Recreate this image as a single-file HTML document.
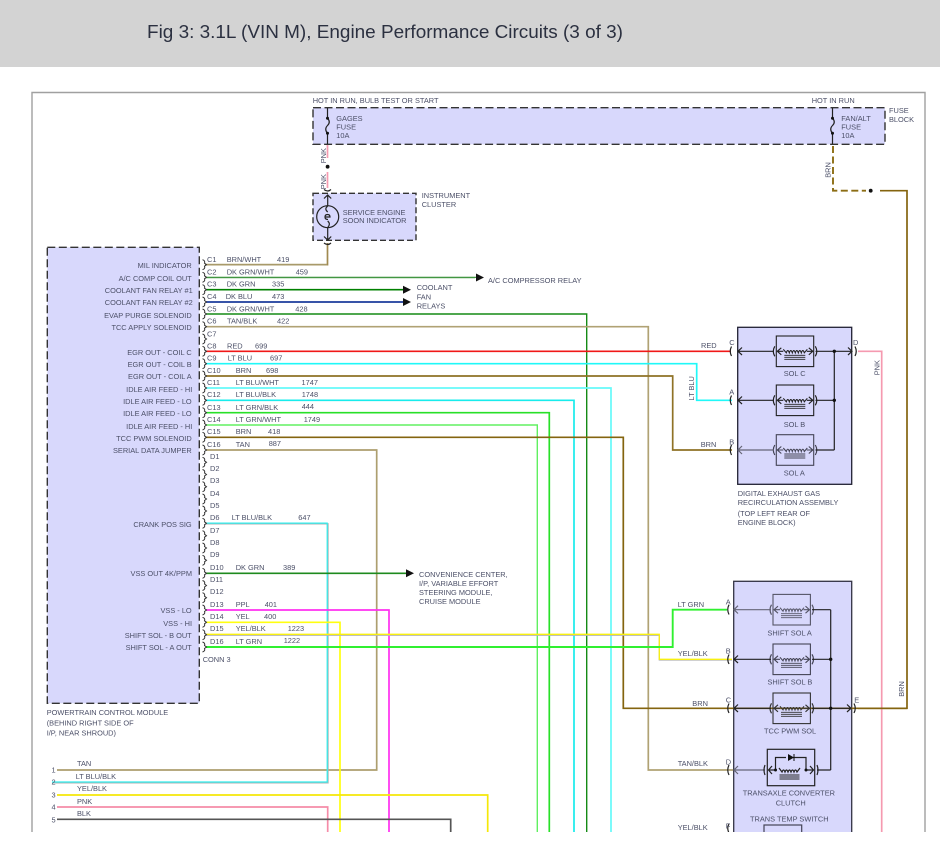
<!DOCTYPE html>
<html><head><meta charset="utf-8"><title>Fig 3</title>
<style>
html,body{margin:0;padding:0;background:#fff;width:940px;height:844px;overflow:hidden}
svg{display:block;position:absolute;left:0;top:0}
.t{filter:blur(.25px)}
.t text{font-family:"Liberation Sans",sans-serif;font-size:7.4px;fill:#4c5068}
.r text{text-anchor:end}
.w{fill:none;stroke-width:1.7}
.k{fill:none;stroke:#222;stroke-width:1.2}
</style></head><body>
<svg width="940" height="844" viewBox="0 0 940 844" xmlns="http://www.w3.org/2000/svg">
<defs>
<g id="pin"><path d="M202.5 -5Q205.500 -4 204.500 -1.500L206.500 0L204.500 1.500Q205.500 4 202.500 5" fill="none" stroke="#333" stroke-width="1"/></g>
<g id="coil" fill="none">
<path d="M7 -2L10 1.500Q11.500 -3 13 1.500Q14.500 -3 16 1.500Q17.500 -3 19 1.500Q20.500 -3 22 1.500Q23.500 -3 25 1.500Q26.500 -3 28 1.500L31 -2"/>
</g>
<g id="sol" fill="none">
<rect x="0" y="-15.300" width="37.400" height="30.600"/>
<path d="M-1.500 -5Q-4.500 0 -1.500 5M39 -5Q42 0 39 5" stroke-width="1.200"/>
<path d="M5 -3.500L1 0L5 3.500M32.500 -3.500L36.500 0L32.500 3.500M1 0H7M30.500 0H36.500"/>
<use href="#coil"/>
<path d="M8 4H29M8 6H29M8 8H29" stroke-width=".9"/>
</g>
<clipPath id="c"><rect x="0" y="0" width="940" height="832"/></clipPath>
</defs>
<rect width="940" height="67" fill="#d3d3d3"/>
<text x="147" y="38" font-family="'Liberation Sans',sans-serif" font-size="18.500" fill="#2b3040" textLength="476" lengthAdjust="spacingAndGlyphs">Fig 3: 3.1L (VIN M), Engine Performance Circuits (3 of 3)</text>

<g clip-path="url(#c)">
<path d="M32 840V92.500H925V840" fill="none" stroke="#a0a0a0" stroke-width="1.400"/>

<!-- boxes -->
<rect x="313" y="107.700" width="572" height="36.600" fill="#d8d8fc" stroke="#333" stroke-width="1.400" stroke-dasharray="8 3.500"/>
<rect x="313" y="193.300" width="103" height="47" fill="#d8d8fc" stroke="#333" stroke-width="1.400" stroke-dasharray="6 3"/>
<rect x="47.300" y="247.300" width="152" height="456" fill="#d8d8fc" stroke="#333" stroke-width="1.400" stroke-dasharray="8 3.500"/>
<rect x="737.700" y="327.300" width="114" height="157" fill="#d8d8fc" stroke="#223" stroke-width="1.300"/>
<rect x="733.700" y="581.300" width="118" height="270" fill="#d8d8fc" stroke="#334" stroke-width="1.300"/>

<!-- wires -->
<g class="w">
<path d="M327.500 145V158M327.500 172V188" stroke="#f59ab0" stroke-width="1.700"/>
<path d="M327.500 243V264.700H205" stroke="#a08a50"/>
<path d="M205 264.700H327" stroke="#a89a6a"/>
<path d="M206 278H475" stroke="#cfe5cf"/><path d="M206 277.300H476" stroke="#2e8b2e" stroke-width="1.200"/>
<path d="M206 289.700H404" stroke="#008000"/>
<path d="M206 302H404" stroke="#1c3c9c"/>
<path d="M206 314H586.700V832" stroke="#158a15" stroke-width="1.400"/>
<path d="M206 326.700H648.300V770H733" stroke="#b0a274"/>
<path d="M206 351.300H731" stroke="#f01818"/>
<path d="M206 363.700H696.700V400.300H732" stroke="#20f8f8"/>
<path d="M206 376H672.700V450H732" stroke="#8f7226"/>
<path d="M206 388H611V832" stroke="#66fafa"/>
<path d="M206 400.300H574V832" stroke="#18ecec"/>
<path d="M206 412.700H549.300V832" stroke="#28e028"/>
<path d="M206 425H537.300V832" stroke="#60f060" stroke-width="1.400"/>
<path d="M206 437.300H623.300V708.300H907V190.700H880" stroke="#84640f"/>
<path d="M206 450H376.700V770H57" stroke="#ad9f6f"/>
<path d="M206 523.800H328V782.800H52" stroke="#b0b0b0" stroke-width="1.300"/>
<path d="M206 523.100H327.200V782H52" stroke="#30eeee" stroke-width="1.200"/>
<path d="M206 573.300H406" stroke="#1e8a1e"/>
<path d="M206 610H389V832" stroke="#ff30f0"/>
<path d="M206 622.300H340V832" stroke="#ffff10"/>
<path d="M57 795H487.700V832" stroke="#f5e808"/>
<path d="M57 807H327.700V832" stroke="#f58ca8"/>
<path d="M57 819.300H450.700V832" stroke="#555"/>
<path d="M206 635.300H659.300V660H732" stroke="#b5b5b5" stroke-width="1.200"/>
<path d="M206 634.300H659.300V659.300H732" stroke="#f8f010" stroke-width="1.300"/>
<path d="M206 647H672.700V609.700H727" stroke="#30f030" stroke-width="1.900"/>
<path d="M858 351.300H881.700V832" stroke="#f59ab0"/>
<path d="M858 708.300H907" stroke="#84640f"/>
<path d="M833 146V190.700H866" stroke="#8c6d14" stroke-dasharray="7 3.500" stroke-width="1.900"/>
</g>

<!-- arrows -->
<path d="M476 273.500L484 277.500L476 281.500Z M403 285.700L411 289.700L403 293.700Z M403 298L411 302L403 306Z M406 569.300L414 573.300L406 577.300Z" fill="#111"/>
<circle cx="327.600" cy="166.700" r="1.900" fill="#111"/>
<circle cx="870.700" cy="190.700" r="1.900" fill="#111"/>

<!-- fuses -->
<g class="k">
<path d="M327.500 108V118.300Q331 122 327.500 125.500Q324 129 327.500 133.300V144"/>
<path d="M832.500 108V118.300Q836 122 832.500 125.500Q829 129 832.500 133.300V144"/>
</g>
<circle cx="327.500" cy="118.300" r="1.500" fill="#111"/><circle cx="327.500" cy="133.300" r="1.500" fill="#111"/>
<circle cx="832.500" cy="118.300" r="1.500" fill="#111"/><circle cx="832.500" cy="133.300" r="1.500" fill="#111"/>

<!-- lamp -->
<g class="k">
<path d="M324 189.500Q327.700 192.500 331 189.500M324 243Q327.700 246 331 243"/>
<path d="M327.700 195V240M324 198.500L327.700 195L331.200 198.500M324 236.500L327.700 240L331.200 236.500"/>
<circle cx="327.700" cy="216.700" r="11" fill="#d8d8fc" stroke-width="1.200"/>
<path d="M327.700 206Q324 209 327.700 212M327.700 221Q331 224 327.700 227.500M325 217H330Q330 214.500 327.500 214.500Q325 214.500 325 217Q325 219.500 328 219.500"/>
</g>

<!-- pins -->
<use href="#pin" y="264.700"/><use href="#pin" y="277.300"/><use href="#pin" y="289.700"/><use href="#pin" y="302"/><use href="#pin" y="314"/><use href="#pin" y="326.700"/><use href="#pin" y="339"/><use href="#pin" y="351.300"/><use href="#pin" y="363.700"/><use href="#pin" y="376"/><use href="#pin" y="388"/><use href="#pin" y="400.300"/><use href="#pin" y="412.700"/><use href="#pin" y="425"/><use href="#pin" y="437.300"/><use href="#pin" y="450"/><use href="#pin" y="462.300"/><use href="#pin" y="474.500"/><use href="#pin" y="486.700"/><use href="#pin" y="499"/><use href="#pin" y="511"/><use href="#pin" y="523.300"/><use href="#pin" y="535.700"/><use href="#pin" y="548"/><use href="#pin" y="560.300"/><use href="#pin" y="573.300"/><use href="#pin" y="585.500"/><use href="#pin" y="597.700"/><use href="#pin" y="610"/><use href="#pin" y="622.300"/><use href="#pin" y="634.700"/><use href="#pin" y="647"/>

<!-- EGR solenoids -->
<g stroke="#222" stroke-width="1.100">
<use href="#sol" x="776.300" y="351.300"/>
<use href="#sol" x="776.300" y="400.300"/>
<use href="#sol" x="776.300" y="450" stroke="#445"/>
</g>
<g class="k">
<path d="M731.500 346.500Q729 351.300 731.500 356M731.500 395.500Q729 400.300 731.500 405M731.500 445Q729 450 731.500 455"/>
<path d="M742 347.500L738 351.300L742 355M738 351.300H774M742 396.500L738 400.300L742 404M738 400.300H774"/>
<path d="M742 446L738 450L742 454M738 450H774" stroke="#667"/>
<path d="M815.500 351.300H852M848 347.500L852 351.300L848 355M855 346.500Q857.500 351.300 855 356"/>
<path d="M815.500 400.300H834.300M815.500 450H834.300M834.300 351.300V450"/>
</g>
<circle cx="834.300" cy="351.300" r="1.700" fill="#111"/><circle cx="834.300" cy="400.300" r="1.700" fill="#111"/>

<!-- Trans solenoids -->
<g stroke="#333" stroke-width="1.100">
<use href="#sol" x="773" y="609.700" stroke="#556"/>
<use href="#sol" x="773" y="659.300" stroke="#445"/>
<use href="#sol" x="773" y="708.300"/>
</g>
<g class="k">
<path d="M729 604.700Q726.500 609.700 729 614.500M729 654.500Q726.500 659.300 729 664M729 703.500Q726.500 708.300 729 713M729 765Q726.500 770 729 775M729 824Q726.500 828 729 833"/>
<path d="M738 605.700L734 609.700L738 613.500M734 609.700H771" stroke="#667"/>
<path d="M738 655.500L734 659.300L738 663M734 659.300H771M738 704.500L734 708.300L738 712M734 708.300H771"/>
<path d="M738 766L734 770L738 774M734 770H765" stroke="#667"/>
<path d="M812 609.700H830.700M812 659.300H830.700M812 708.300H851M847 704.500L851 708.300L847 712M854 703.500Q856.500 708.300 854 713M817 770H830.700M830.700 609.700V770"/>
<rect x="767.300" y="749.300" width="47.400" height="36.400"/>
<path d="M765 765Q763 770 765 775M817 765Q819 770 817 775M772 766L768.500 770L772 774M810 766L813.500 770L810 774M768.500 770H775.500M806 770H813.500"/>
<path d="M775.500 770V757.500H786M793 757.500H806V770"/>
<path d="M779 768L782 772Q783.500 768 785 772Q786.500 768 788 772Q789.500 768 791 772Q792.500 768 794 772Q795.500 768 797 772L800 768"/>
<path d="M779.500 775H799.500M779.500 777H799.500M779.500 779H799.500" stroke-width=".9"/>
<rect x="764" y="825" width="37.700" height="20" stroke="#445"/>
</g>
<path d="M788 754V761L794 757.500Z" fill="#111"/><path d="M794 754V761" stroke="#111"/>
<circle cx="775.500" cy="770" r="1.500" fill="#111"/><circle cx="806" cy="770" r="1.500" fill="#111"/>
<circle cx="830.700" cy="659.300" r="1.700" fill="#111"/><circle cx="830.700" cy="708.300" r="1.700" fill="#111"/>

<!-- text -->
<g class="t">
<text x="312.700" y="103">HOT IN RUN, BULB TEST OR START</text>
<text x="811.700" y="103">HOT IN RUN</text>
<text x="889" y="113">FUSE</text><text x="889" y="122">BLOCK</text>
<text x="336.300" y="121">GAGES</text><text x="336.300" y="129.300">FUSE</text><text x="336.300" y="138">10A</text>
<text x="841.300" y="121">FAN/ALT</text><text x="841.300" y="129.300">FUSE</text><text x="841.300" y="138">10A</text>
<text x="421.700" y="198">INSTRUMENT</text><text x="421.700" y="207">CLUSTER</text>
<text x="342.700" y="215">SERVICE ENGINE</text><text x="342.700" y="223">SOON INDICATOR</text>
<text x="488" y="283">A/C COMPRESSOR RELAY</text>
<text x="416.700" y="290">COOLANT</text><text x="416.700" y="299.300">FAN</text><text x="416.700" y="308.300">RELAYS</text>
<text x="419" y="577">CONVENIENCE CENTER,</text><text x="419" y="586">I/P, VARIABLE EFFORT</text><text x="419" y="595">STEERING MODULE,</text><text x="419" y="604">CRUISE MODULE</text>
<text transform="translate(326,155.700) rotate(-90)" text-anchor="middle">PNK</text>
<text transform="translate(326,181.700) rotate(-90)" text-anchor="middle">PNK</text>
<text transform="translate(830.500,170) rotate(-90)" text-anchor="middle">BRN</text>
<text transform="translate(694,388.300) rotate(-90)" text-anchor="middle">LT BLU</text>
<text transform="translate(879.500,367.700) rotate(-90)" text-anchor="middle">PNK</text>
<text transform="translate(904,689) rotate(-90)" text-anchor="middle">BRN</text>

<g class="r">
<text x="191.700" y="268">MIL INDICATOR</text>
<text x="191.700" y="281">A/C COMP COIL OUT</text>
<text x="192.700" y="293">COOLANT FAN RELAY #1</text>
<text x="192.700" y="305">COOLANT FAN RELAY #2</text>
<text x="191.700" y="318">EVAP PURGE SOLENOID</text>
<text x="191.700" y="330">TCC APPLY SOLENOID</text>
<text x="191.700" y="355">EGR OUT - COIL C</text>
<text x="191.700" y="367">EGR OUT - COIL B</text>
<text x="191.700" y="379">EGR OUT - COIL A</text>
<text x="192.300" y="392">IDLE AIR FEED - HI</text>
<text x="191.700" y="404">IDLE AIR FEED - LO</text>
<text x="191.700" y="416">IDLE AIR FEED - LO</text>
<text x="192.300" y="429">IDLE AIR FEED - HI</text>
<text x="191.700" y="441">TCC PWM SOLENOID</text>
<text x="191.700" y="453">SERIAL DATA JUMPER</text>
<text x="191.700" y="527">CRANK POS SIG</text>
<text x="192" y="576">VSS OUT 4K/PPM</text>
<text x="191.700" y="613">VSS - LO</text>
<text x="192" y="626">VSS - HI</text>
<text x="191.700" y="638">SHIFT SOL - B OUT</text>
<text x="191.700" y="650">SHIFT SOL - A OUT</text>
</g>

<text x="207" y="262">C1</text><text x="226.700" y="262">BRN/WHT</text><text x="277" y="262">419</text>
<text x="207" y="274.500">C2</text><text x="226.700" y="274.500">DK GRN/WHT</text><text x="295.700" y="274.500">459</text>
<text x="207" y="286.500">C3</text><text x="226.700" y="286.500">DK GRN</text><text x="272" y="286.500">335</text>
<text x="207" y="299">C4</text><text x="225.700" y="299">DK BLU</text><text x="272" y="299">473</text>
<text x="207" y="311.500">C5</text><text x="226.700" y="311.500">DK GRN/WHT</text><text x="295.300" y="311.500">428</text>
<text x="207" y="323.500">C6</text><text x="227" y="323.500">TAN/BLK</text><text x="277" y="323.500">422</text>
<text x="207" y="336.500">C7</text>
<text x="207" y="348.500">C8</text><text x="227" y="348.500">RED</text><text x="255" y="348.500">699</text>
<text x="207" y="360.500">C9</text><text x="227.700" y="360.500">LT BLU</text><text x="270" y="360.500">697</text>
<text x="207" y="373">C10</text><text x="235.700" y="373">BRN</text><text x="266" y="373">698</text>
<text x="207" y="385">C11</text><text x="235.700" y="385">LT BLU/WHT</text><text x="301.500" y="385">1747</text>
<text x="207" y="397">C12</text><text x="235.700" y="397">LT BLU/BLK</text><text x="301.700" y="397">1748</text>
<text x="207" y="410">C13</text><text x="235.700" y="410">LT GRN/BLK</text><text x="301.700" y="409">444</text>
<text x="207" y="422">C14</text><text x="235.700" y="422">LT GRN/WHT</text><text x="303.700" y="422">1749</text>
<text x="207" y="434">C15</text><text x="235.700" y="434">BRN</text><text x="268" y="434">418</text>
<text x="207" y="447">C16</text><text x="235.700" y="447">TAN</text><text x="268.700" y="446">887</text>
<text x="210" y="459">D1</text><text x="210" y="471">D2</text><text x="210" y="483">D3</text><text x="210" y="496">D4</text><text x="210" y="508">D5</text>
<text x="210" y="520">D6</text><text x="231.700" y="520">LT BLU/BLK</text><text x="298.300" y="520">647</text>
<text x="210" y="533">D7</text><text x="210" y="545">D8</text><text x="210" y="557">D9</text>
<text x="210" y="570">D10</text><text x="235.700" y="570">DK GRN</text><text x="283" y="570">389</text>
<text x="210" y="582">D11</text><text x="210" y="594">D12</text>
<text x="210" y="607">D13</text><text x="235.700" y="607">PPL</text><text x="264.700" y="607">401</text>
<text x="210" y="619">D14</text><text x="235.700" y="619">YEL</text><text x="264" y="619">400</text>
<text x="210" y="631">D15</text><text x="235.700" y="631">YEL/BLK</text><text x="287.700" y="631">1223</text>
<text x="210" y="644">D16</text><text x="235.700" y="644">LT GRN</text><text x="283.700" y="643">1222</text>
<text x="202.700" y="662">CONN 3</text>

<text x="46.700" y="715">POWERTRAIN CONTROL MODULE</text>
<text x="46.700" y="725.300">(BEHIND RIGHT SIDE OF</text>
<text x="46.700" y="735.300">I/P, NEAR SHROUD)</text>
<text x="77" y="766">TAN</text><text x="75.700" y="779">LT BLU/BLK</text><text x="77" y="791">YEL/BLK</text><text x="77" y="804">PNK</text><text x="77" y="816">BLK</text>
<text x="51.500" y="772.500">1</text><text x="51.500" y="784.500">2</text><text x="51.500" y="797.500">3</text><text x="51.500" y="809.500">4</text><text x="51.500" y="822.500">5</text>

<text x="701" y="348">RED</text><text x="729.300" y="345">C</text><text x="729.300" y="394.300">A</text>
<text x="700.700" y="447">BRN</text><text x="729.300" y="444.300">B</text><text x="853" y="345">D</text>
<text x="783.700" y="376">SOL C</text><text x="783.700" y="427">SOL B</text><text x="783.700" y="475.500">SOL A</text>
<text x="737.700" y="496">DIGITAL EXHAUST GAS</text><text x="737.700" y="505">RECIRCULATION ASSEMBLY</text><text x="737.700" y="516">(TOP LEFT REAR OF</text><text x="737.700" y="525">ENGINE BLOCK)</text>

<text x="677.700" y="607">LT GRN</text><text x="725.700" y="604.300">A</text>
<text x="677.700" y="656">YEL/BLK</text><text x="725.700" y="653.300">B</text>
<text x="692.300" y="706">BRN</text><text x="725.700" y="702.700">C</text><text x="854.300" y="702.300">E</text>
<text x="677.700" y="766">TAN/BLK</text><text x="725.700" y="764.300">D</text>
<text x="677.700" y="830">YEL/BLK</text><text x="725.700" y="828.300">F</text>
<text x="767.500" y="635.500">SHIFT SOL A</text><text x="767.500" y="684.500">SHIFT SOL B</text><text x="764" y="733.500">TCC PWM SOL</text>
<text x="742.700" y="795.500">TRANSAXLE CONVERTER</text><text x="775.700" y="805.500">CLUTCH</text><text x="750" y="821.500">TRANS TEMP SWITCH</text>
</g>
</g>
</svg>
</body></html>
